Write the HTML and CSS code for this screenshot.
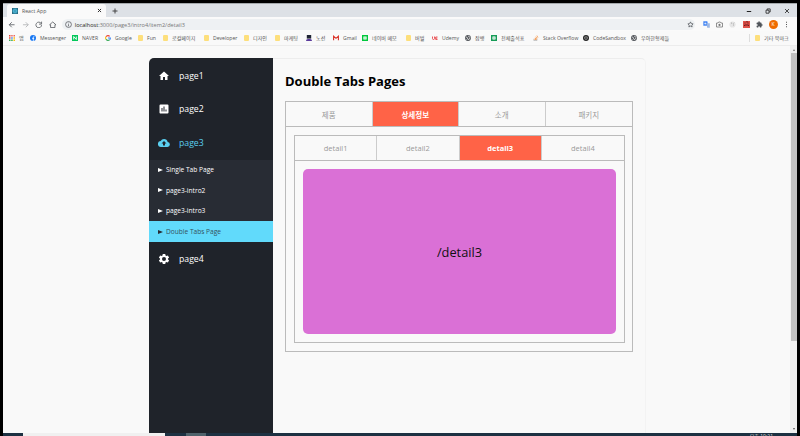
FILE: index.html
```html
<!DOCTYPE html>
<html lang="ko">
<head>
<meta charset="utf-8">
<title>React App</title>
<link rel="stylesheet" href="styles.css">
</head>
<body>
<div class="window">
  <div class="tabstrip">
    <div class="tab">
      <svg class="favicon" viewBox="0 0 14 14"><rect width="14" height="14" fill="#286b83"/><g fill="none" stroke="#61dafb"><ellipse cx="7" cy="7" rx="6" ry="2.4"/><ellipse cx="7" cy="7" rx="6" ry="2.4" transform="rotate(60 7 7)"/><ellipse cx="7" cy="7" rx="6" ry="2.4" transform="rotate(120 7 7)"/></g></svg>
      <span class="tab-title">React App</span>
      <svg class="tab-close" viewBox="0 0 8 8"><path d="M1.5 1.5l5 5m0-5l-5 5" stroke="#333" stroke-width="1.6"/></svg>
    </div>
    <svg class="new-tab" viewBox="0 0 6 6"><path d="M3 .5v5M.5 3h5" stroke="#444"/></svg>
    <div class="controls">
      <svg viewBox="0 0 6 6"><path d="M.8 3.5h4.4" stroke="#222"/></svg>
      <svg viewBox="0 0 6 6"><path d="M1 2.2h3v3H1zM2.2 2V.9h3v3H4.2" fill="none" stroke="#222" stroke-width=".8"/></svg>
      <svg viewBox="0 0 6 6"><path d="M1 1l4 4m0-4L1 5" stroke="#222" stroke-width=".8"/></svg>
    </div>
  </div>
  <div class="toolbar">
    <div class="nav">
      <svg viewBox="0 0 24 24"><path d="M21 12H4m8-8l-8 8 8 8" class="line"/></svg>
      <svg viewBox="0 0 24 24" class="dim"><path d="M3 12h17m-8-8l8 8-8 8" class="line"/></svg>
      <svg viewBox="0 0 24 24"><path d="M19 7a9 9 0 1 0 2 6M21 2v8h-8" class="line"/></svg>
      <svg viewBox="0 0 24 24"><path d="M2 12L12 3l10 9h-3v9H5v-9z" class="line"/></svg>
    </div>
    <div class="address">
      <svg viewBox="0 0 24 24"><circle cx="12" cy="12" r="10" class="line"/><path d="M12 6v2m0 3v7" class="line"/></svg>
      <span class="url"><b>localhost</b>:3000/page3/intro4/item2/detail3</span>
      <svg class="star" viewBox="0 0 24 24"><path d="M12 3l2.8 6 6.2.8-4.600 4.400 1.200 6.300L12 17.500l-5.600 3 1.200-6.300L3 9.800 9.200 9z" class="line"/></svg>
    </div>
    <div class="extensions">
      <svg viewBox="0 0 7 7"><path d="M.3.2h4l1 4.600h-5z" fill="#4285f4"/><path d="M3.500 2.200h3.300v4.600H4.200z" fill="#9db8e4"/><path d="M1.300 2.500h2M2.300 1.500v2" stroke="#fff" stroke-width=".6"/></svg>
      <svg viewBox="0 0 7 7"><path d="M.5 2h1.500L2.700 1h1.600L5 2h1.500v4h-6z" fill="none" stroke="#777" stroke-width=".8"/><circle cx="3.500" cy="3.900" r="1.100" fill="#777"/></svg>
      <svg viewBox="0 0 7 7"><circle cx="3.500" cy="3.500" r="3.100" fill="#e5e5e5"/><path d="M2 2.100h.8m1.500.4L5 1.800M4 4h.8" stroke="#888" stroke-width=".8"/></svg>
      <svg viewBox="0 0 7 7"><path d="M0 0h7v7H0z" fill="#df5149"/><path d="M1.500 2h1m2 0h1m-4 3V4h4v1M4 0v1.500" stroke="#6b1b1b" stroke-width="1" fill="none"/></svg>
      <svg viewBox="0 0 24 24"><path d="M20.500 11H19V7c0-1.100-.9-2-2-2h-4V3.500a2.500 2.500 0 0 0-5 0V5H4a2 2 0 0 0-2 2v3.800h1.500a2.700 2.700 0 0 1 0 5.400H2V20c0 1.100.9 2 2 2h3.800v-1.500a2.700 2.700 0 0 1 5.400 0V22H17a2 2 0 0 0 2-2v-4h1.500a2.500 2.500 0 0 0 0-5z" fill="#50545a"/></svg>
      <span class="avatar">K</span>
      <svg viewBox="0 0 7 7"><path d="M3 .8h1v1H3zM3 3h1v1H3zM3 5.200h1v1H3z" fill="#555"/></svg>
    </div>
  </div>
  <div class="bookmarks">
    <div class="bookmark"><svg viewBox="0 0 6 6"><path d="M0 0h1.500v1.500H0zM0 2.200h1.500v1.500H0z" fill="#ea4335"/><path d="M2.200 0h1.500v1.500H2.200zM4.500 0H6v1.500H4.500z" fill="#ee675c"/><path d="M0 4.500h1.500V6H0zM2.200 4.500h1.500V6H2.200z" fill="#34a853"/><path d="M2.200 2.200h1.500v1.500H2.200z" fill="#4285f4"/><path d="M4.500 2.200H6v1.500H4.500zM4.500 4.500H6V6H4.500z" fill="#fbbc04"/></svg>앱</div>
    <div class="bookmark"><svg viewBox="0 0 6 6"><circle cx="3" cy="3" r="3" fill="#1877f2"/><path d="M3.300 6V2.300q0-.8 1-.7M2.200 3.400h2" stroke="#fff" stroke-width=".8" fill="none"/></svg>Messenger</div>
    <div class="bookmark"><svg viewBox="0 0 6 6"><path d="M0 0h6v6H0z" fill="#03c75a"/><path d="M1.700 4.500v-3l2.600 3v-3" stroke="#fff" stroke-width=".9" fill="none"/></svg>NAVER</div>
    <div class="bookmark"><svg viewBox="0 0 6 6" fill="none" stroke-width="1.100"><path d="M1 1.700A2.400 2.400 0 0 1 4.700 1.300" stroke="#ea4335"/><path d="M1 1.700a2.400 2.400 0 0 0 0 2.600" stroke="#fbbc05"/><path d="M1 4.300a2.400 2.400 0 0 0 3.600.5" stroke="#34a853"/><path d="M4.600 4.800Q5.400 4.200 5.400 3H3" stroke="#4285f4"/></svg>Google</div>
    <div class="bookmark folder">Fun</div>
    <div class="bookmark folder">로컬페이지</div>
    <div class="bookmark folder">Developer</div>
    <div class="bookmark folder">디자인</div>
    <div class="bookmark folder">마케팅</div>
    <div class="bookmark"><svg viewBox="0 0 6 6"><path d="M.8 0h4.400v3.600H.8z" fill="#1e2433"/><path d="M0 6q0-2 2-2h2q2 0 2 2z" fill="#5b3b9c"/></svg>노션</div>
    <div class="bookmark"><svg viewBox="0 0 6 6"><path d="M.6 5.200V1.200L3 3.300l2.400-2.100v4" fill="none" stroke="#d93025" stroke-width="1.100"/></svg>Gmail</div>
    <div class="bookmark"><svg viewBox="0 0 6 6"><path d="M.7.7h4.600v4.600H.7z" fill="#fff" stroke="#00c73c" stroke-width="1.400"/><path d="M2.200 3h1.600" stroke="#00c73c" stroke-width=".6"/></svg>네이버 메모</div>
    <div class="bookmark folder">버벌</div>
    <div class="bookmark"><svg viewBox="0 0 6 6"><path d="M.5 1.500v2q0 1 1 1t1-1v-2M5.500 2H3.700v2.500h1.800M3.500 3.200h1.800" fill="none" stroke="#e8484c" stroke-width=".9"/></svg>Udemy</div>
    <div class="bookmark"><svg viewBox="0 0 6 6"><circle cx="3" cy="3" r="2.900" fill="#505358"/><path d="M1 2q1.500 0 1.600 1.200T1.500 4.500M3.600.8q-.5 1.200 1.600 1.500M3.300 5q.2-1.300 1.700-1.500" fill="none" stroke="#fff" stroke-width=".7"/></svg>잡뱅</div>
    <div class="bookmark"><svg viewBox="0 0 6 6"><path d="M0 0h6v6H0z" fill="#169b57"/><path d="M1 2.200h4M1 3.800h4M3 1v4" stroke="#fff" stroke-width=".8"/></svg>전체출석표</div>
    <div class="bookmark"><svg viewBox="0 0 6 6"><path d="M.8 3.800v1.700H4V3.800" fill="none" stroke="#aaa" stroke-width=".6"/><path d="M1.500 4.500h2M1.700 3.300l2 .5M2.500 2l1.700 1.200M3.900.6l1 2" stroke="#f48024" stroke-width=".7"/></svg>Stack Overflow</div>
    <div class="bookmark"><svg viewBox="0 0 6 6"><circle cx="3" cy="3" r="3" fill="#222"/><path d="M3 1.300l1.500.8v1.700L3 4.700l-1.500-.9V2.100zM3 3v1.500M3 3l1.300-.8M3 3l-1.300-.8" fill="none" stroke="#ccc" stroke-width=".4"/></svg>CodeSandbox</div>
    <div class="bookmark"><svg viewBox="0 0 6 6"><circle cx="3" cy="3" r="2.900" fill="#505358"/><path d="M1 2q1.500 0 1.600 1.200T1.500 4.500M3.600.8q-.5 1.200 1.600 1.500M3.300 5q.2-1.300 1.700-1.500" fill="none" stroke="#fff" stroke-width=".7"/></svg>우아한형제들</div>
    <div class="bookmark folder other">기타 북마크</div>
  </div>
  <div class="viewport">
    <div class="page">
      <div class="card">
        <nav class="sidebar">
          <a class="item"><svg viewBox="0 0 24 24"><path d="M10 20v-6h4v6h5v-8h3L12 3 2 12h3v8z"/></svg>page1</a>
          <a class="item"><svg viewBox="0 0 24 24"><path d="M19 3H5a2 2 0 0 0-2 2v14c0 1.100.9 2 2 2h14a2 2 0 0 0 2-2V5a2 2 0 0 0-2-2zM9 17H7v-7h2zm4 0h-2V7h2zm4 0h-2v-4h2z"/></svg>page2</a>
          <a class="item current"><svg viewBox="0 0 24 24"><path d="M19.350 10.040A7.490 7.490 0 0 0 12 4 7.480 7.480 0 0 0 5.350 8.040 5.990 5.990 0 0 0 6 20h13a5 5 0 0 0 .350-9.960zM14 13v4h-4v-4H7l5-5 5 5z"/></svg>page3</a>
          <div class="submenu">
            <a class="subitem">Single Tab Page</a>
            <a class="subitem">page3-intro2</a>
            <a class="subitem">page3-intro3</a>
            <a class="subitem selected">Double Tabs Page</a>
          </div>
          <a class="item"><svg viewBox="0 0 24 24"><path fill-rule="evenodd" d="M9.500 2h5l.5 3 2 1.200 2.800-1.100 2.400 4.200-2.300 1.900v1.600l2.300 1.900-2.400 4.200-2.800-1.100L15 19l-.5 3h-5L9 19l-2-1.200-2.800 1.100-2.400-4.200 2.300-1.900v-1.600L1.800 9.300l2.400-4.200L7 6.200 9 5zM12 8a4 4 0 1 0 0 8 4 4 0 0 0 0-8z"/></svg>page4</a>
        </nav>
        <main class="content">
          <h1>Double Tabs Pages</h1>
          <section class="panel">
            <div class="tabs outer">
              <span>제품</span><span class="active">상세정보</span><span>소개</span><span>패키지</span>
            </div>
            <div class="panel inner">
              <div class="tabs">
                <span>detail1</span><span>detail2</span><span class="active">detail3</span><span>detail4</span>
              </div>
              <div class="display">/detail3</div>
            </div>
          </section>
        </main>
      </div>
    </div>
    <div class="scrollbar"><i class="up"></i><div class="thumb"></div><i class="down"></i></div>
  </div>
</div>
<div class="taskbar"><div class="search"></div><div class="task"></div><span class="clock">오후 10:21</span></div>
</body>
</html>
```
FILE: styles.css
```css
* { box-sizing: border-box; }
body {
  margin: 0; width: 800px; height: 436px; overflow: hidden;
  padding: 3px 3px 0; background: #000;
  font-family: "Open Sans", "Noto Sans CJK KR", sans-serif;
  display: flex; flex-direction: column;
}
svg { display: block; flex: none; }
.line { fill: none; stroke: #55595e; stroke-width: 2.600; }
.window { height: 430px; flex: none; background: #f9f9f9; display: flex; flex-direction: column; }

.tabstrip { height: 14px; flex: none; background: #dde1e6; display: flex; align-items: center; padding-left: 4px; border-top: 1px solid #a4a9ac; }
.tab { width: 99px; height: 13px; background: #fafafa; border-radius: 3px 3px 0 0; display: flex; align-items: center; padding: 0 4px 0 5px; }
.favicon { width: 6px; height: 6px; }
.tab-title { font-size: 5.200px; color: #555; margin-left: 4px; flex: 1; }
.tab-close { width: 5px; height: 5px; }
.new-tab { width: 6px; height: 6px; margin-left: 6px; }
.controls { margin-left: auto; display: flex; gap: 13px; padding-right: 7px; }
.controls svg { width: 6px; height: 6px; }

.toolbar { height: 14px; flex: none; display: flex; align-items: center; padding: 1px 7px 0 5px; background: #fafafa; }
.nav { display: flex; gap: 6px; width: 54px; }
.nav svg { width: 7.500px; height: 7.500px; }
.dim { opacity: .45; }
.address { width: 636px; height: 11px; border-radius: 6px; background: #eef1f3; display: flex; align-items: center; padding: 0 3px; }
.address svg { width: 7px; height: 7px; }
.address .star { margin-right: -2px; }
.url { font-size: 5.600px; color: #777; margin-left: 3px; flex: 1; }
.url b { font-weight: 400; color: #222; }
.extensions { margin-left: 8px; display: flex; align-items: center; gap: 6.400px; }
.extensions svg { width: 7px; height: 7px; }
.avatar { width: 9px; height: 9px; margin: 0 -1px; border-radius: 50%; background: #ef6c00; color: #fff; font-size: 5px; line-height: 9px; text-align: center; }

.bookmarks {
  height: 15px; flex: none; border-bottom: 1px solid #ececec; padding-left: 6px; align-items: center;
  display: grid;
  grid-template-columns: 21px 42px 33px 33px 25px 41px 40px 31px 31px 27px 29px 44px 26px 33px 26px 42px 50px 48px 121px 1fr;
}
.bookmark { display: flex; align-items: center; gap: 4px; white-space: nowrap; font-size: 5.100px; line-height: 8px; color: #555; }
.bookmark svg { width: 6px; height: 6px; }
.folder::before { content: ""; width: 5px; height: 6px; border-radius: 1px; background: #fddf7c; flex: none; }
.other { border-left: 1px solid #ddd; padding-left: 5px; margin-left: -3px; }

.viewport { flex: 1; display: flex; min-height: 0; }
.page { width: 787px; padding: 12px 0 0 146px; overflow: hidden; }
.card { width: 497px; height: 390px; display: flex; border-top: 1px solid #ededed; border-right: 1px solid #f3f3f3; border-radius: 5px; }
.sidebar { width: 124px; margin-top: -1px; padding-top: 1px; background: #1f232a; border-radius: 5px 0 0 0; flex: none; }
.item { height: 33.500px; display: flex; align-items: center; padding-left: 9px; gap: 9px; color: #fff; font-size: 8.700px; }
.item svg { width: 12px; height: 12px; fill: currentColor; }
.current { color: #5bcff0; }
.submenu { background: #282c34; }
.subitem { height: 20.600px; display: flex; align-items: center; padding-left: 9px; font-size: 6.600px; color: #fff; }
.subitem::before { content: ""; border-left: 5px solid currentColor; border-top: 2.500px solid transparent; border-bottom: 2.500px solid transparent; margin-right: 3px; }
.selected { background: #61dafb; color: #35515c; }
.selected::before { border-left-color: #282c34; }

.content { padding: 12px 0 0 12px; }
h1 { margin: 0; font-size: 13px; line-height: 20px; font-weight: 700; color: #000; white-space: nowrap; }
.panel { width: 348px; height: 251px; margin-top: 10px; border: 1px solid #bbb; }
.tabs { height: 25px; display: grid; grid-template-columns: repeat(4, 1fr); border-bottom: 1px solid #bbb; }
.tabs span { display: flex; align-items: center; justify-content: center; font-size: 7.500px; color: #999; border-right: 1px solid #ccc; }
.tabs span:last-child { border-right: 0; }
.tabs .active { background: #ff6347; color: #fff; font-weight: 700; }
.inner { width: 331px; height: 208px; margin: 8px 0 0 8px; }
.display { width: 313px; height: 165px; margin: 8px 0 0 8px; border-radius: 5px; background: #da70d6; display: flex; align-items: center; justify-content: center; font-size: 12.800px; color: #111; }

.scrollbar { width: 7px; background: #f0f0f0; display: flex; flex-direction: column; align-items: center; }
.thumb { width: 6px; height: 288px; background: #c1c1c1; }
.up { margin: 3px 0 2px; border: 1.500px solid transparent; border-top: 0; border-bottom: 2px solid #777; }
.down { margin-top: auto; margin-bottom: 3px; border: 1.500px solid transparent; border-bottom: 0; border-top: 2px solid #555; }
.taskbar { height: 3px; flex: none; background: #1d3142; display: flex; overflow: hidden; }
.search { width: 142px; margin-left: 20px; background: #f0f0f0; }
.task { width: 20px; margin-left: 21px; background: #4f626b; }
.clock { margin-left: auto; margin-right: 24px; font-size: 5px; line-height: 6px; color: #ddd; }
```
